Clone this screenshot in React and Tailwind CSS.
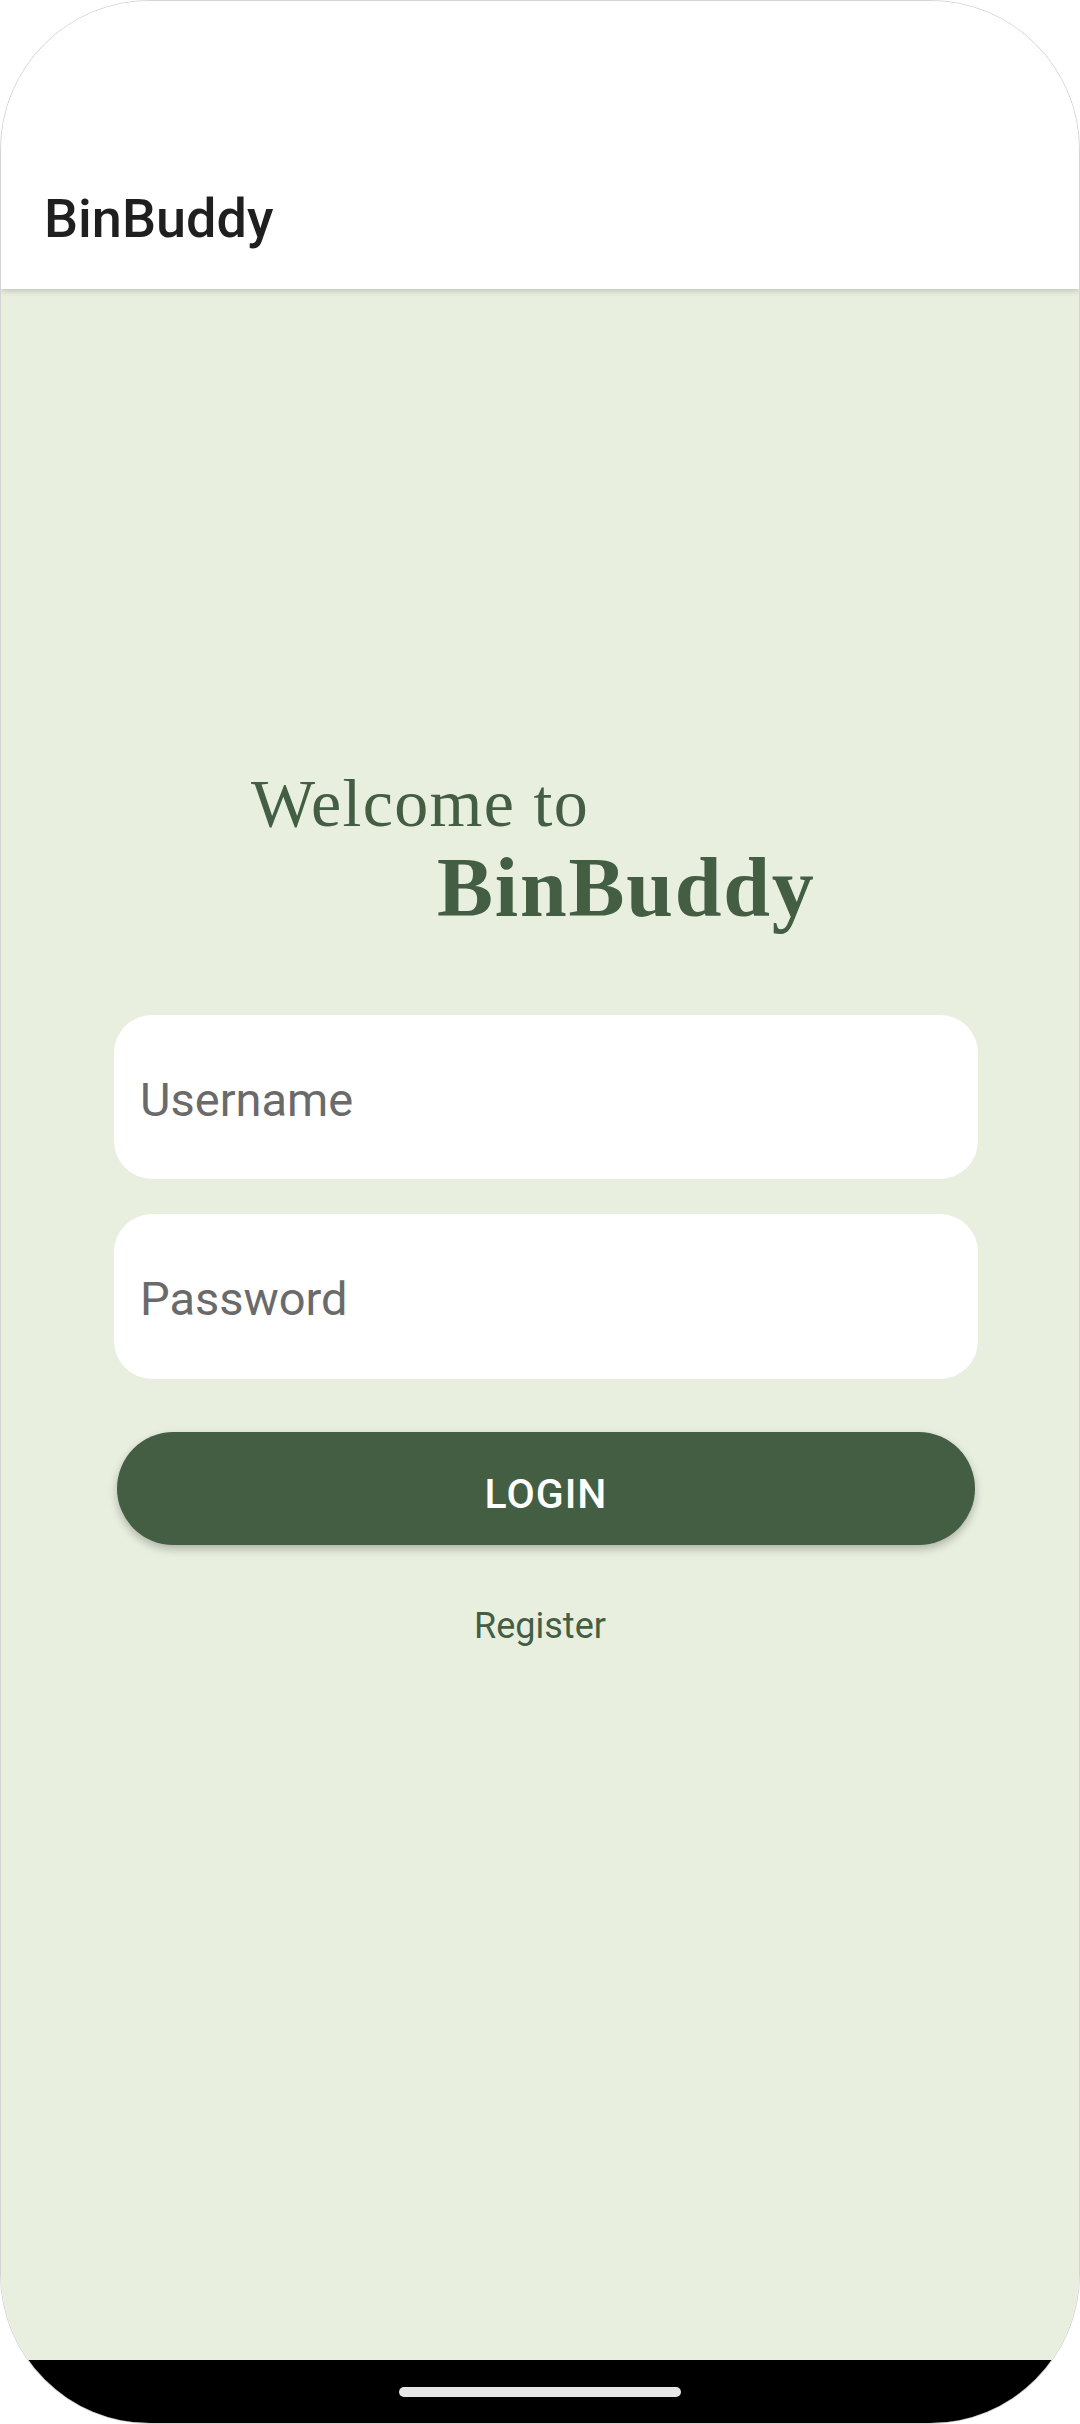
export default function App() {
  return (
    <div className="w-[1080px] h-[2424px] bg-white" style={{ fontFamily: 'Roboto, "Liberation Sans", sans-serif' }}>
      <div className="h-full flex flex-col overflow-hidden rounded-[150px] border border-[#d4d4d4]">
        {/* App bar */}
        <header className="relative z-10 h-[288px] shrink-0 bg-white flex items-end pl-[43px] pb-[43px] shadow-[0_2px_6px_rgba(0,0,0,0.18)]">
          <h1 className="text-[54px] leading-none font-medium text-[#1f1f1f]">BinBuddy</h1>
        </header>

        {/* Login content */}
        <main className="flex-1 bg-[#e8efdf] pt-[480px]">
          <div className="flex flex-col items-start text-[#445e44]" style={{ fontFamily: '"Liberation Serif", "DejaVu Serif", serif' }}>
            <div className="ml-[250px] text-[68px] leading-none tracking-[1.3px]">Welcome to</div>
            <div className="ml-[436px] mt-[9px] text-[84px] leading-none font-bold tracking-[1.8px]">BinBuddy</div>
          </div>

          <div className="ml-[113px] w-[864px] mt-[85px] flex flex-col">
            <div className="h-[164px] rounded-[38px] bg-white flex items-center pl-[26px]">
              <span className="text-[47px] leading-none text-[#6a6a6a] pt-[4px]">Username</span>
            </div>
            <div className="mt-[35px] h-[165px] rounded-[38px] bg-white flex items-center pl-[26px]">
              <span className="text-[47px] leading-none text-[#6a6a6a] pt-[4px]">Password</span>
            </div>
            <button className="mt-[53px] mx-[3px] h-[113px] rounded-full bg-[#445e44] text-white text-[41px] leading-none font-medium tracking-wide pt-[12px] shadow-[0_4px_8px_rgba(0,0,0,0.25)]">
              LOGIN
            </button>
          </div>

          <div className="mt-[63px] text-center text-[36px] leading-none text-[#445e44]">Register</div>
        </main>

        {/* Gesture bar */}
        <footer className="h-[63px] shrink-0 bg-black flex justify-center pt-[27px]">
          <div className="w-[282px] h-[10px] rounded-full bg-[#e6e6e6]" />
        </footer>
      </div>
    </div>
  );
}
